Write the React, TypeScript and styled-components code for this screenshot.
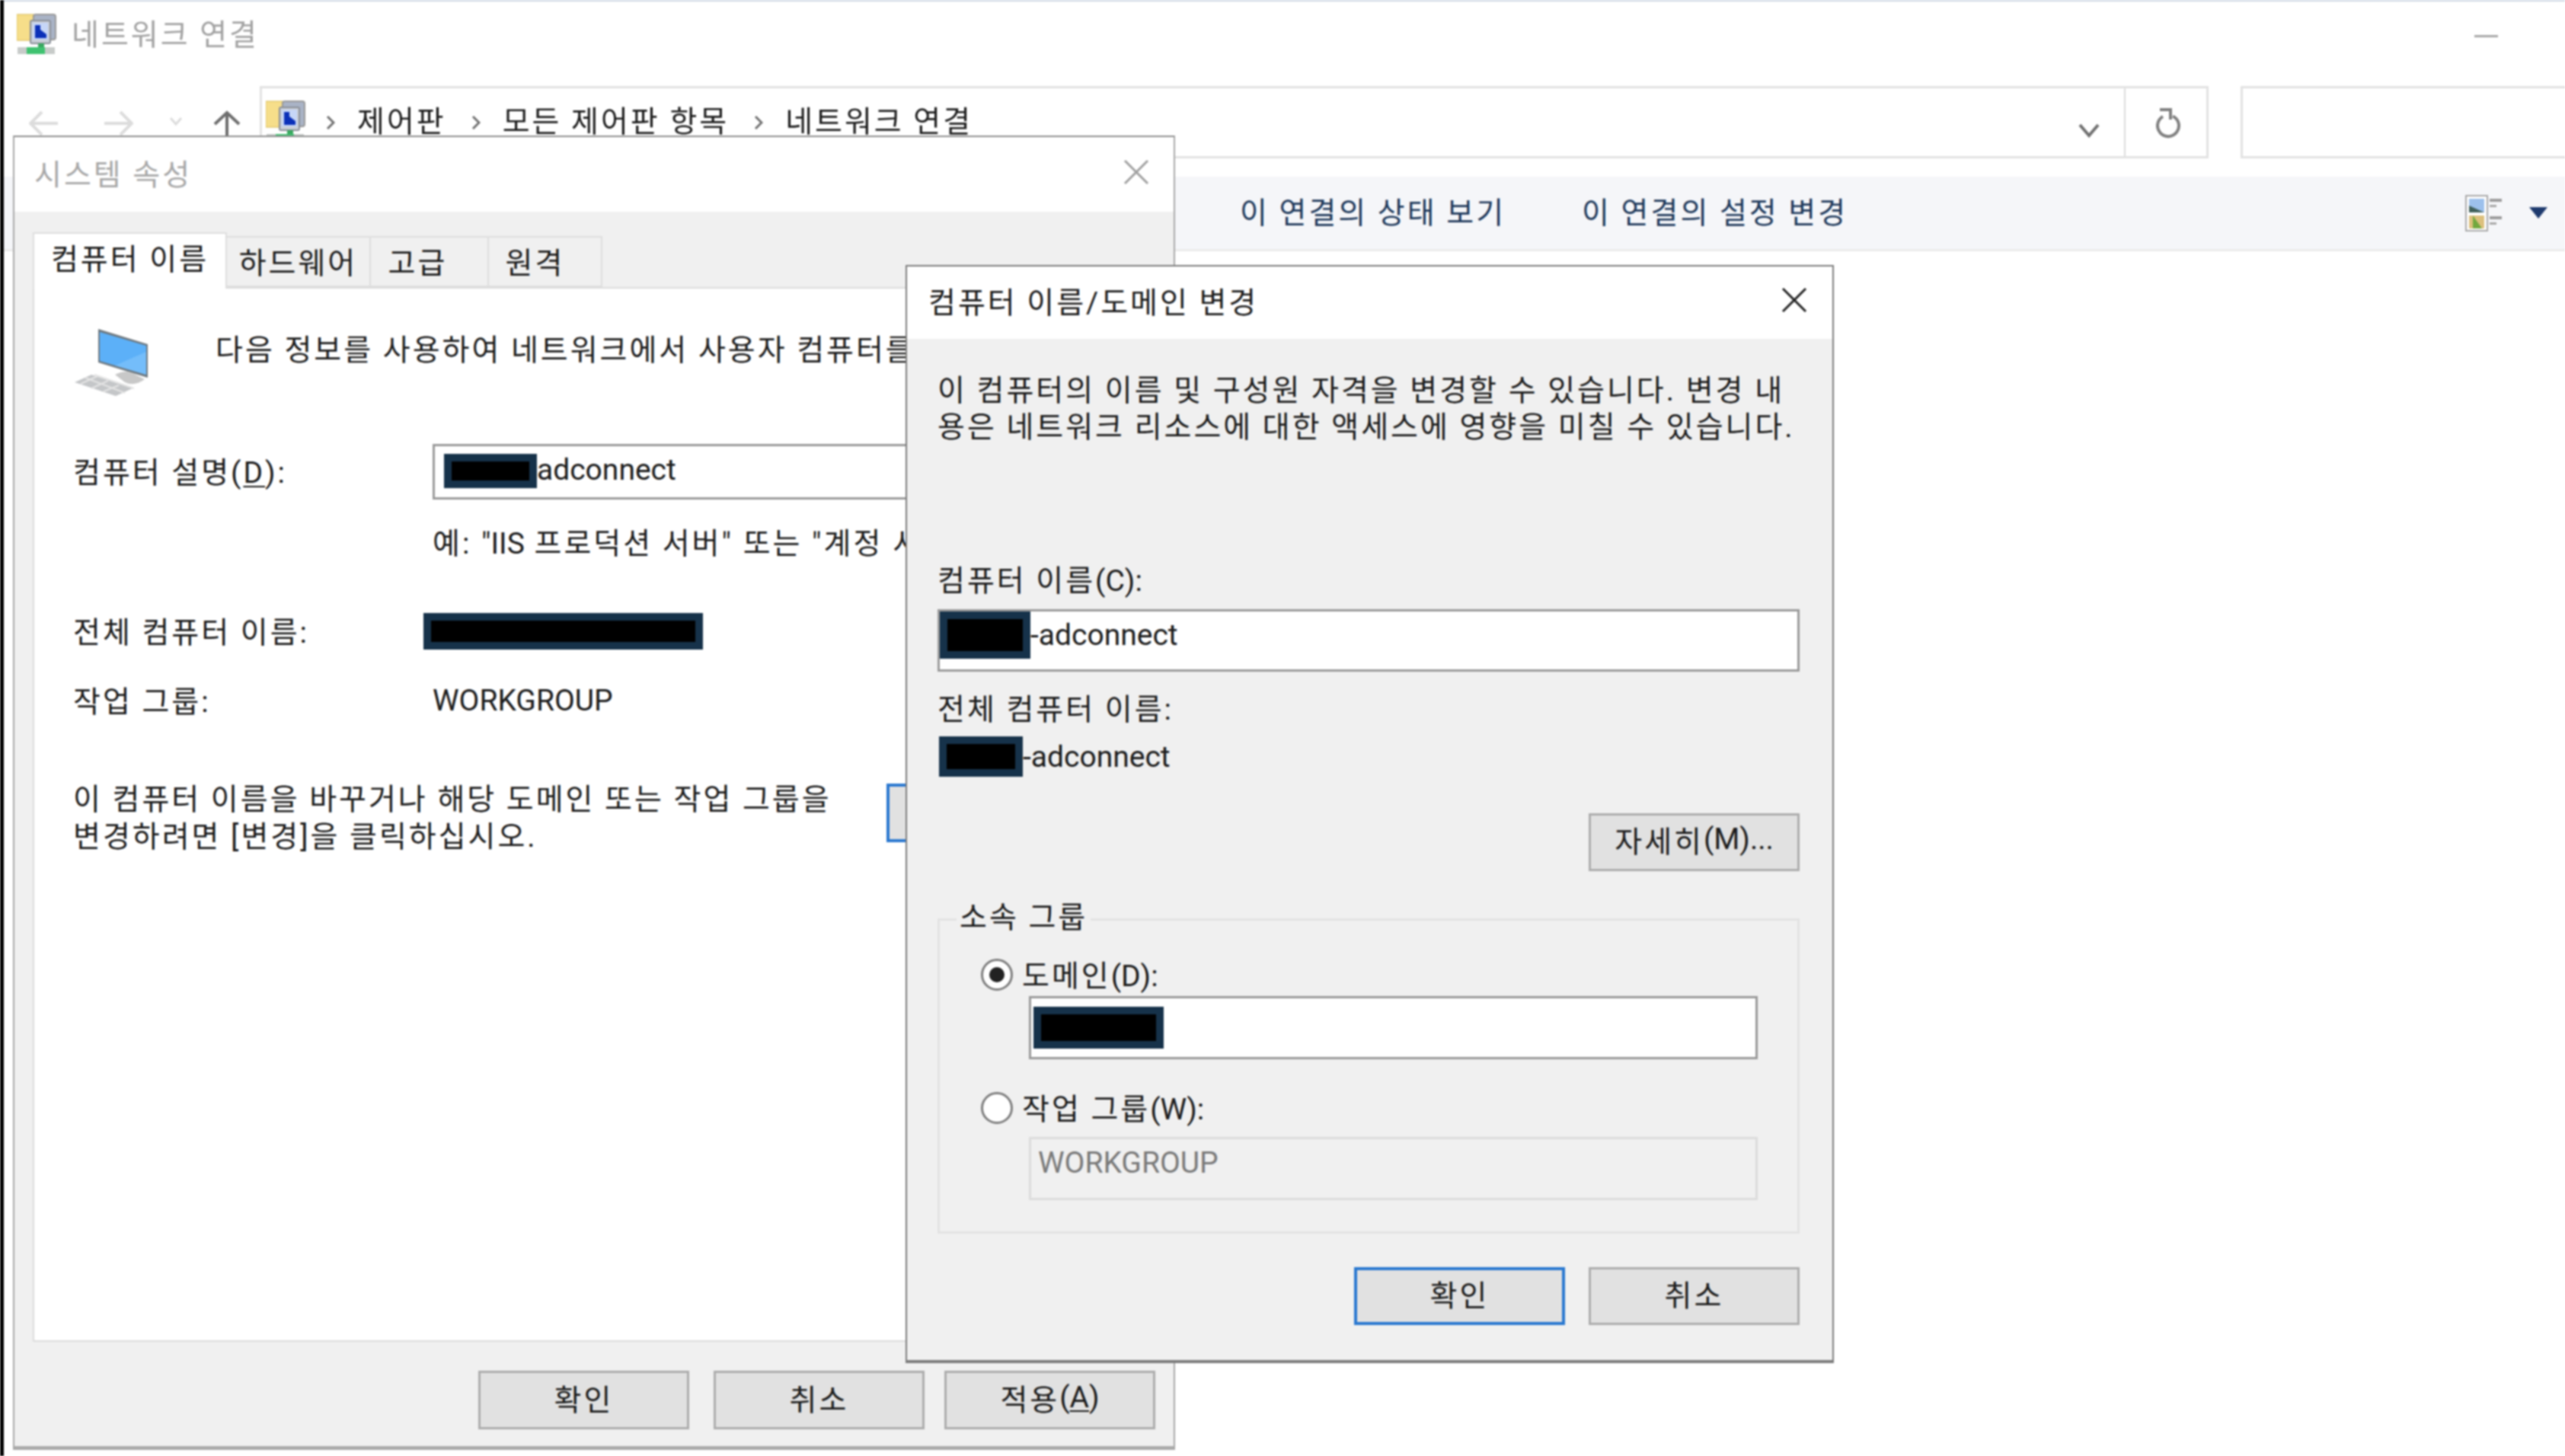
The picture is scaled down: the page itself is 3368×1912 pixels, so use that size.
import React from 'react';
import styled, { createGlobalStyle } from 'styled-components';

const GlobalStyle = createGlobalStyle`
  html, body {
    margin: 0;
    padding: 0;
    background: #fff;
  }
  body {
    font-family: Roboto, "Noto Sans CJK KR", "Liberation Sans", sans-serif;
    font-size: 39px;
    letter-spacing: 3px;
    color: #1c1c1c;
  }
  * { box-sizing: border-box; }
`;

const Page = styled.div`
  position: relative;
  width: 3368px;
  height: 1912px;
  display: flex;
  overflow: hidden;
  background: #fff;
`;

const Soft = styled.div`
  position: absolute;
  inset: 0;
  display: flex;
  filter: blur(0.9px);
`;

const EdgeStrip = styled.div`
  width: 5px;
  flex: none;
  background: #000;
`;

const Explorer = styled.div`
  flex: 1;
  display: flex;
  flex-direction: column;
  border-top: 2px solid #ccd6e2;
`;

const TitleBar = styled.div`
  height: 111px;
  flex: none;
  display: flex;
  align-items: flex-start;
  padding: 16px 88px 0 17px;
  gap: 20px;
`;

const TitleText = styled.span`
  color: #a2a2a2;
  line-height: 56px;
  flex: 1;
`;

const MinimizeMark = styled.div`
  width: 31px;
  height: 3px;
  margin-top: 28px;
  background: #a8a8a8;
`;

const NavRow = styled.div`
  height: 95px;
  flex: none;
  display: flex;
`;

const NavButtons = styled.div`
  width: 336px;
  flex: none;
  display: flex;
  align-items: flex-start;
  padding: 32px 0 0 33px;
`;

const NavIcon = styled.svg<{ $gap?: number; $top?: number }>`
  flex: none;
  margin-left: ${(p) => p.$gap ?? 0}px;
  margin-top: ${(p) => p.$top ?? 0}px;
`;

const AddressBox = styled.div`
  width: 2559px;
  flex: none;
  display: flex;
  border: 3px solid #e2e2e2;
`;

const Breadcrumb = styled.div`
  flex: 1;
  display: flex;
  align-items: flex-start;
  padding: 16px 0 0 5px;
  line-height: 56px;
`;

const Crumb = styled.span`
  margin-left: 29px;
  white-space: nowrap;
`;

const CrumbArrowIcon = styled.svg<{ $gap: number }>`
  flex: none;
  margin: 19px 0 0 ${(p) => p.$gap}px;
`;

const ChevronCell = styled.div`
  width: 108px;
  flex: none;
  display: flex;
  justify-content: flex-end;
  padding: 45px 31px 0 0;
`;

const RefreshCell = styled.div`
  width: 108px;
  flex: none;
  display: flex;
  justify-content: center;
  padding: 26px 0 0 8px;
  border-left: 2px solid #dcdcdc;
`;

const SearchBox = styled.div`
  flex: 1;
  margin-left: 42px;
  border: 3px solid #e2e2e2;
  border-right: none;
`;

const Toolbar = styled.div`
  margin-top: 24px;
  height: 98px;
  flex: none;
  display: flex;
  align-items: center;
  background: #f5f6f9;
  border-bottom: 3px solid #ececec;
  padding: 0 23px 0 1623px;
`;

const ToolbarLabel = styled.span<{ $gap?: number }>`
  color: #1e395b;
  margin: 0 0 8px ${(p) => p.$gap ?? 0}px;
  white-space: nowrap;
`;

const ToolbarEnd = styled.div`
  margin-left: auto;
  display: flex;
  align-items: center;
  gap: 34px;
`;

const SystemWindow = styled.div`
  position: absolute;
  left: 17px;
  top: 178px;
  width: 1526px;
  height: 1726px;
  display: flex;
  flex-direction: column;
  background: #f0f0f0;
  border: 2px solid #a8a8a8;
  border-top-color: #8e8e8e;
  border-bottom: 5px solid #aaa;
`;

const WindowTitle = styled.div<{ $height: number; $dim?: boolean }>`
  height: ${(p) => p.$height}px;
  flex: none;
  display: flex;
  align-items: center;
  justify-content: space-between;
  padding-bottom: 7px;
  background: #fff;
  color: ${(p) => (p.$dim ? '#a8a8a8' : '#1c1c1c')};
`;

const SystemBody = styled.div`
  flex: 1;
  display: flex;
  flex-direction: column;
  padding: 27px 24px 22px 24px;
`;

const TabStrip = styled.div`
  height: 72px;
  flex: none;
  display: flex;
  align-items: flex-end;
`;

const Tab = styled.div<{ $width: number; $active?: boolean; $shift?: number }>`
  position: relative;
  z-index: 1;
  width: ${(p) => p.$width}px;
  height: ${(p) => (p.$active ? 74 : 67)}px;
  margin-bottom: ${(p) => (p.$active ? -2 : 0)}px;
  display: flex;
  align-items: ${(p) => (p.$active ? 'flex-start' : 'center')};
  justify-content: center;
  padding: ${(p) => (p.$active ? '2px 0 0' : `0 ${p.$shift ?? 0}px 4px 0`)};
  background: ${(p) => (p.$active ? '#fff' : '#f0f0f0')};
  border: 2px solid #dedede;
  border-bottom: ${(p) => (p.$active ? 'none' : '2px solid #dedede')};
  border-left: ${(p) => (p.$active ? '2px solid #dedede' : 'none')};
  white-space: nowrap;
`;

const TabPanel = styled.div`
  flex: 1;
  display: flex;
  flex-direction: column;
  padding: 53px 0 0 51px;
  background: #fff;
  border: 2px solid #dcdcdc;
`;

const Row = styled.div<{ $top: number; $height?: number; $start?: boolean }>`
  margin-top: ${(p) => p.$top}px;
  height: ${(p) => (p.$height ? `${p.$height}px` : 'auto')};
  flex: none;
  display: flex;
  align-items: ${(p) => (p.$start ? 'flex-start' : 'center')};
  white-space: nowrap;
`;

const IntroText = styled.div`
  margin-left: 89px;
  line-height: 56px;
  align-self: flex-start;
`;

const FieldLabel = styled.div`
  width: 472px;
  flex: none;
  margin-bottom: 5px;
`;

const Input = styled.div<{ $width?: number; $height: number; $disabled?: boolean; $top?: number }>`
  width: ${(p) => (p.$width ? `${p.$width}px` : '100%')};
  height: ${(p) => p.$height}px;
  margin-top: ${(p) => p.$top ?? 0}px;
  flex: none;
  display: flex;
  align-items: flex-start;
  background: ${(p) => (p.$disabled ? '#f0f0f0' : '#fff')};
  border: 3px solid ${(p) => (p.$disabled ? '#dcdcdc' : '#9a9a9a')};
  color: ${(p) => (p.$disabled ? '#7a7a7a' : 'inherit')};
  white-space: nowrap;
`;

const Redaction = styled.span<{ $w: number; $h: number; $left?: number; $top?: number }>`
  display: inline-block;
  flex: none;
  width: ${(p) => p.$w}px;
  height: ${(p) => p.$h}px;
  margin-left: ${(p) => p.$left ?? 0}px;
  margin-top: ${(p) => p.$top ?? 0}px;
  background: #000;
  border: 10px solid #16324a;
`;

const Latin = styled.span<{ $left?: number; $top?: number }>`
  letter-spacing: 0;
  line-height: 52px;
  margin-left: ${(p) => p.$left ?? 0}px;
  margin-top: ${(p) => p.$top ?? 0}px;
`;

const Narrow = styled.span`
  letter-spacing: 0;
`;

const Mnemonic = styled.span`
  text-decoration: underline;
  text-underline-offset: 4px;
  text-decoration-thickness: 2px;
`;

const Para = styled.div<{ $lh: number }>`
  line-height: ${(p) => p.$lh}px;
  white-space: nowrap;
`;

const ChangeParaBox = styled.div`
  width: 1068px;
  flex: none;
`;

const PushButton = styled.div<{ $w?: number; $h?: number; $primary?: boolean }>`
  width: ${(p) => p.$w ?? 277}px;
  height: ${(p) => p.$h ?? 77}px;
  flex: none;
  display: flex;
  align-items: center;
  justify-content: center;
  padding-bottom: 8px;
  background: #e1e1e1;
  border: ${(p) => (p.$primary ? '4px solid #2a78d0' : '3px solid #adadad')};
  white-space: nowrap;
`;

const ChangeButton = styled(PushButton)`
  margin-top: 3px;
`;

const WindowFooter = styled.div`
  margin-top: 38px;
  flex: none;
  display: flex;
  justify-content: flex-end;
  gap: 32px;
  & > *:last-child { margin-left: -6px; }
`;

const ChangeDialog = styled.div`
  position: absolute;
  left: 1189px;
  top: 348px;
  width: 1219px;
  height: 1442px;
  display: flex;
  flex-direction: column;
  background: #f0f0f0;
  border: 2px solid #7c7c7c;
  border-bottom-width: 4px;
  z-index: 2;
`;

const TitleInner = styled.span<{ $left: number }>`
  margin-left: ${(p) => p.$left}px;
`;

const CloseIcon = styled.svg<{ $right: number }>`
  margin-right: ${(p) => p.$right}px;
  flex: none;
`;

const DialogBody = styled.div`
  flex: 1;
  display: flex;
  flex-direction: column;
  padding: 44px 43px 0 40px;
`;

const DialogLabel = styled.div<{ $top: number }>`
  margin-top: ${(p) => p.$top}px;
  line-height: 48px;
  white-space: nowrap;
`;

const ValueRow = styled.div`
  margin-top: 11px;
  height: 53px;
  display: flex;
  align-items: center;
`;

const RightRow = styled.div<{ $top: number; $gap?: number }>`
  margin-top: ${(p) => p.$top}px;
  display: flex;
  justify-content: flex-end;
  gap: ${(p) => p.$gap ?? 0}px;
`;

const GroupBox = styled.div`
  position: relative;
  margin-top: 62px;
  height: 414px;
  flex: none;
  padding: 49px 0 0 54px;
  border: 3px solid #e3e3e3;
`;

const GroupLegend = styled.span`
  position: absolute;
  left: 22px;
  top: -28px;
  padding: 0 4px;
  line-height: 48px;
  background: #f0f0f0;
`;

const RadioRow = styled.div<{ $top?: number }>`
  margin-top: ${(p) => p.$top ?? 0}px;
  height: 44px;
  display: flex;
  align-items: center;
  gap: 12px;
  white-space: nowrap;
`;

const RadioLabel = styled.span`
  margin-bottom: 5px;
`;

const Radio = styled.span<{ $checked?: boolean }>`
  width: 42px;
  height: 42px;
  flex: none;
  display: flex;
  align-items: center;
  justify-content: center;
  border-radius: 50%;
  background: #fff;
  border: 3px solid #7e7e7e;
  &::after {
    content: '';
    width: 20px;
    height: 20px;
    border-radius: 50%;
    background: ${(p) => (p.$checked ? '#222' : 'transparent')};
  }
`;

const Indented = styled.div<{ $top: number }>`
  margin: ${(p) => p.$top}px 0 0 63px;
`;

const NetworkIcon = () => (
  <svg width="52" height="54" viewBox="0 0 52 54">
    <rect x="0" y="1" width="22" height="34" fill="#f6de8a" stroke="#d8b94e" strokeWidth="1" />
    <rect x="22" y="1" width="29" height="33" rx="3" fill="#a9b3c6" stroke="#999" strokeWidth="2" />
    <rect x="18" y="9" width="26" height="30" rx="2" fill="#c9ced6" stroke="#8a8f98" strokeWidth="2" />
    <rect x="21" y="12" width="20" height="22" fill="#c6d6f7" />
    <path d="M24 15h7v6l8 6v5H24z" fill="#0b30b8" />
    <rect x="28" y="39" width="8" height="5" fill="#3aa860" />
    <rect x="1" y="44" width="49" height="9" fill="#c7cbc9" />
    <rect x="13" y="44" width="24" height="9" fill="#3fc270" />
  </svg>
);

const ComputerIcon = () => (
  <svg width="98" height="88" viewBox="0 0 98 88">
    <path d="M33 0 L98 20 V64 L33 44 Z" fill="#5f6a72" opacity="0.9" />
    <path d="M35 4 L96 22 V60 L35 42 Z" fill="#5cb0f8" />
    <path d="M96 30 V60 L55 48 Z" fill="#74bdfa" />
    <path d="M55 60 Q70 52 82 60 L94 66 Q80 76 68 70 Z" fill="#c8c8c8" />
    <path d="M2 70 L24 60 L78 78 L56 88 Z" fill="#c4c6c8" />
    <path d="M16 64 L68 84 M28 60 L80 78 M10 72 L32 62 M24 78 L46 68 M40 82 L60 74" stroke="#e4e4e4" strokeWidth="2" />
  </svg>
);

const ViewIcon = () => (
  <svg width="50" height="48" viewBox="0 0 50 48">
    <rect x="1" y="1" width="28" height="46" fill="#fff" stroke="#a8a8a8" strokeWidth="2" />
    <rect x="5" y="5" width="20" height="18" fill="#9cc0ec" />
    <path d="M5 23 L5 14 L25 23Z" fill="#40605a" />
    <rect x="5" y="27" width="20" height="17" fill="#dcc07c" />
    <path d="M10 27 L22 44 H10Z" fill="#72a83e" />
    <rect x="32" y="5" width="16" height="4" fill="#9c9c9c" />
    <rect x="32" y="13" width="9" height="3" fill="#a8a8a8" />
    <rect x="32" y="28" width="16" height="4" fill="#9c9c9c" />
    <rect x="32" y="36" width="9" height="3" fill="#a8a8a8" />
  </svg>
);

const Close = ({ right, color }: { right: number; color: string }) => (
  <CloseIcon $right={right} width="34" height="34" viewBox="0 0 34 34">
    <path d="M2 2 L32 32 M32 2 L2 32" stroke={color} strokeWidth="3" />
  </CloseIcon>
);

const CrumbArrow = ({ gap }: { gap: number }) => (
  <CrumbArrowIcon $gap={gap} width="12" height="20" viewBox="0 0 12 20">
    <path d="M2 2 L10 10 L2 18" stroke="#707070" strokeWidth="3" fill="none" />
  </CrumbArrowIcon>
);

export default function App() {
  return (
    <>
      <GlobalStyle />
      <Page>
        <Soft>
          <EdgeStrip />
          <Explorer>
            <TitleBar>
              <NetworkIcon />
              <TitleText>네트워크 연결</TitleText>
              <MinimizeMark />
            </TitleBar>
            <NavRow>
              <NavButtons>
                <NavIcon width="39" height="34" viewBox="0 0 39 34">
                  <path d="M38 17 H3 M17 2 L2 17 L17 32" stroke="#dcdcdc" strokeWidth="4" fill="none" />
                </NavIcon>
                <NavIcon $gap={59} width="39" height="34" viewBox="0 0 39 34">
                  <path d="M1 17 H36 M22 2 L37 17 L22 32" stroke="#dcdcdc" strokeWidth="4" fill="none" />
                </NavIcon>
                <NavIcon $gap={47} $top={8} width="18" height="12" viewBox="0 0 18 12">
                  <path d="M2 2 L9 10 L16 2" stroke="#dcdcdc" strokeWidth="3" fill="none" />
                </NavIcon>
                <NavIcon $gap={40} width="36" height="36" viewBox="0 0 36 36">
                  <path d="M18 36 V3 M2 18 L18 3 L34 18" stroke="#6e6e6e" strokeWidth="4" fill="none" />
                </NavIcon>
              </NavButtons>
              <AddressBox>
                <Breadcrumb>
                  <NetworkIcon />
                  <CrumbArrow gap={27} />
                  <Crumb>제어판</Crumb>
                  <CrumbArrow gap={33} />
                  <Crumb>모든 제어판 항목</Crumb>
                  <CrumbArrow gap={33} />
                  <Crumb>네트워크 연결</Crumb>
                </Breadcrumb>
                <ChevronCell>
                  <svg width="30" height="20" viewBox="0 0 30 20">
                    <path d="M3 3 L15 17 L27 3" stroke="#707070" strokeWidth="4" fill="none" />
                  </svg>
                </ChevronCell>
                <RefreshCell>
                  <svg width="34" height="40" viewBox="0 0 34 40">
                    <path d="M22 10.5 A14 14 0 1 1 9 11" stroke="#808080" strokeWidth="4" fill="none" />
                    <path d="M5 2 H19 V15" stroke="#808080" strokeWidth="4" fill="none" />
                  </svg>
                </RefreshCell>
              </AddressBox>
              <SearchBox />
            </NavRow>
            <Toolbar>
              <ToolbarLabel>이 연결의 상태 보기</ToolbarLabel>
              <ToolbarLabel $gap={100}>이 연결의 설정 변경</ToolbarLabel>
              <ToolbarEnd>
                <ViewIcon />
                <svg width="24" height="15" viewBox="0 0 24 15">
                  <path d="M0 0 H24 L12 15 Z" fill="#1e3a6e" />
                </svg>
              </ToolbarEnd>
            </Toolbar>
          </Explorer>

          <SystemWindow>
            <WindowTitle $height={98} $dim>
              <TitleInner $left={26}>시스템 속성</TitleInner>
              <Close right={32} color="#a0a0a0" />
            </WindowTitle>
            <SystemBody>
              <TabStrip>
                <Tab $width={255} $active>컴퓨터 이름</Tab>
                <Tab $width={189}>하드웨어</Tab>
                <Tab $width={155} $shift={30}>고급</Tab>
                <Tab $width={149} $shift={26}>원격</Tab>
              </TabStrip>
              <TabPanel>
                <Row $top={0} $height={88}>
                  <ComputerIcon />
                  <IntroText>다음 정보를 사용하여 네트워크에서 사용자 컴퓨터를</IntroText>
                </Row>
                <Row $top={63} $height={73}>
                  <FieldLabel>컴퓨터 설명(<Mnemonic>D</Mnemonic>):</FieldLabel>
                  <Input $width={900} $height={73}>
                    <Redaction $w={122} $h={45} $left={12} $top={10} />
                    <Latin $top={5}>adconnect</Latin>
                  </Input>
                </Row>
                <Row $top={26} $height={56}>
                  <FieldLabel />
                  <span>예: <Narrow>"IIS</Narrow> 프로덕션 서버" 또는 "계정 서버"</span>
                </Row>
                <Row $top={63} $height={56}>
                  <FieldLabel>전체 컴퓨터 이름:</FieldLabel>
                  <Redaction $w={367} $h={48} $left={-12} />
                </Row>
                <Row $top={35} $height={56}>
                  <FieldLabel>작업 그룹:</FieldLabel>
                  <Latin>WORKGROUP</Latin>
                </Row>
                <Row $top={78} $start>
                  <ChangeParaBox>
                    <Para $lh={49}>
                      이 컴퓨터 이름을 바꾸거나 해당 도메인 또는 작업 그룹을
                      <br />
                      변경하려면 [변경]을 클릭하십시오.
                    </Para>
                  </ChangeParaBox>
                  <ChangeButton $primary>변경(C)...</ChangeButton>
                </Row>
              </TabPanel>
              <WindowFooter>
                <PushButton>확인</PushButton>
                <PushButton>취소</PushButton>
                <PushButton>적용<Narrow>(<Mnemonic>A</Mnemonic>)</Narrow></PushButton>
              </WindowFooter>
            </SystemBody>
          </SystemWindow>

          <ChangeDialog>
            <WindowTitle $height={95}>
              <TitleInner $left={28}>컴퓨터 이름/도메인 변경</TitleInner>
              <Close right={33} color="#222" />
            </WindowTitle>
            <DialogBody>
              <Para $lh={48}>
                이 컴퓨터의 이름 및 구성원 자격을 변경할 수 있습니다. 변경 내
                <br />
                용은 네트워크 리소스에 대한 액세스에 영향을 미칠 수 있습니다.
              </Para>
              <DialogLabel $top={154}>컴퓨터 이름<Narrow>(C):</Narrow></DialogLabel>
              <Input $height={82} $top={13}>
                <Redaction $w={119} $h={62} />
                <Latin $top={5}>-adconnect</Latin>
              </Input>
              <DialogLabel $top={26}>전체 컴퓨터 이름:</DialogLabel>
              <ValueRow>
                <Redaction $w={110} $h={53} $left={2} />
                <Latin>-adconnect</Latin>
              </ValueRow>
              <RightRow $top={48}>
                <PushButton $h={76}>자세히<Narrow>(M)...</Narrow></PushButton>
              </RightRow>
              <GroupBox>
                <GroupLegend>소속 그룹</GroupLegend>
                <RadioRow>
                  <Radio $checked />
                  <RadioLabel>도메인<Narrow>(D):</Narrow></RadioLabel>
                </RadioRow>
                <Indented $top={6}>
                  <Input $width={957} $height={83}>
                    <Redaction $w={171} $h={55} $left={3} $top={11} />
                  </Input>
                </Indented>
                <RadioRow $top={42}>
                  <Radio />
                  <RadioLabel>작업 그룹<Narrow>(W):</Narrow></RadioLabel>
                </RadioRow>
                <Indented $top={16}>
                  <Input $width={957} $height={83} $disabled>
                    <Latin $left={9} $top={5}>WORKGROUP</Latin>
                  </Input>
                </Indented>
              </GroupBox>
              <RightRow $top={44} $gap={31}>
                <PushButton $primary $h={76}>확인</PushButton>
                <PushButton $h={76}>취소</PushButton>
              </RightRow>
            </DialogBody>
          </ChangeDialog>
        </Soft>
      </Page>
    </>
  );
}
